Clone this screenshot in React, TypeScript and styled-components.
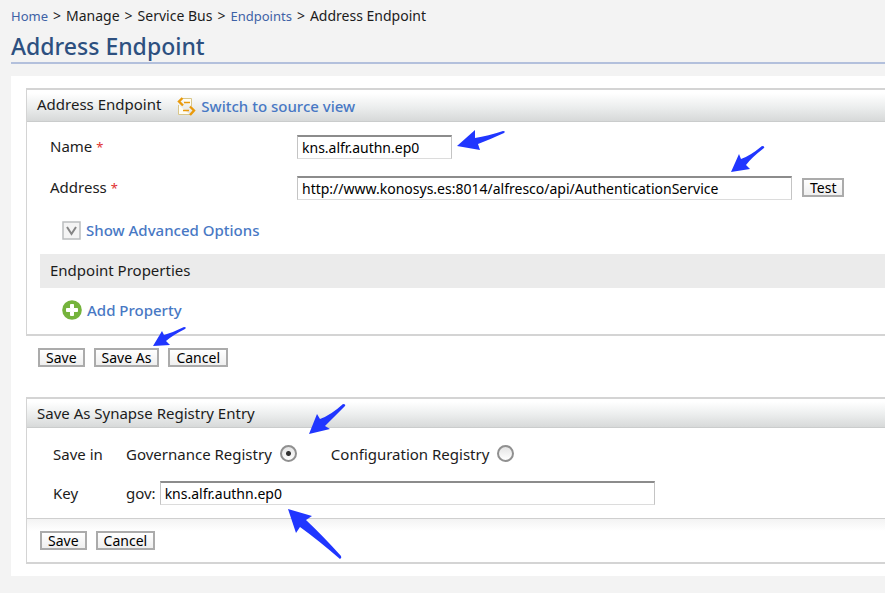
import React, { useState } from "react";
import styled, { createGlobalStyle } from "styled-components";

const GlobalStyle = createGlobalStyle`
  * { box-sizing: border-box; }
  body {
    margin: 0;
    background: #f3f3f3;
    color: #1c1c1c;
    font-family: "Noto Sans", "Open Sans", sans-serif;
    font-size: 15px;
    line-height: 20px;
    overflow-x: hidden;
  }
`;

const Page = styled.div`
  padding: 6px 0 16px 11px;
`;

const Breadcrumb = styled.nav`
  display: flex;
  gap: 5px;
  font-size: 14px;
  line-height: 20px;
  white-space: nowrap;
`;

const CrumbLink = styled.a`
  color: #3e62a6;
  font-size: 13px;
  text-decoration: none;
`;

const Title = styled.h1`
  margin: 4px 0 12px;
  border-bottom: 2px solid #b3c0dc;
  color: #2d5080;
  font-size: 23px;
  font-weight: 500;
  line-height: 32px;
`;

const Workspace = styled.main`
  padding: 12px 0 12px 15px;
  background: #fff;
`;

const Panel = styled.section`
  border: solid #d4d4d4;
  border-width: 2px 0 2px 1px;
`;

const PanelHeader = styled.header`
  display: flex;
  align-items: flex-start;
  gap: 16px;
  padding: 4px 0 4px 10px;
  border-bottom: 1px solid #cacccc;
  background: linear-gradient(#fff 10%, #eceeee 55%, #d7d9d9);
`;

const PanelTitle = styled.h2`
  margin: 0;
  font-size: 15px;
  font-weight: 400;
  line-height: 20px;
`;

const ActionLink = styled.a`
  display: inline-flex;
  align-items: center;
  gap: 5px;
  color: #4878c4;
  font-weight: 500;
  text-decoration: none;
`;

const HeaderLink = styled(ActionLink)`
  padding: 2px 0 1px;
`;

const FormRows = styled.div`
  padding-top: 4px;
`;

const FormRow = styled.div`
  display: grid;
  grid-template-columns: 247px 1fr;
  align-items: center;
  height: 41px;
  padding-left: 23px;
`;

const Required = styled.span`
  color: #e03030;
  font-size: 13px;
`;

const Controls = styled.div<{ $gap?: number }>`
  display: flex;
  align-items: center;
  gap: ${(p) => p.$gap ?? 10}px;
`;

const Anchor = styled.span`
  position: relative;
  display: inline-flex;
`;

const TextField = styled.input<{ $width: number }>`
  width: ${(p) => p.$width}px;
  height: 24px;
  padding: 0 4px;
  border: 1px solid #c4c4c4;
  border-top: 2px solid #8c8c8c;
  border-bottom-color: #dcdcdc;
  border-radius: 0;
  background: #fff;
  color: #000;
  font: 14px "Noto Sans", "Open Sans", sans-serif;
  outline: none;
`;

const Button = styled.button`
  height: 19px;
  padding: 0 6px;
  border: 2px solid #ababab;
  border-radius: 0;
  background: linear-gradient(#fff, #efefef);
  color: #000;
  font: 14px/15px "Noto Sans", "Open Sans", sans-serif;
`;

const Indented = styled.div`
  display: flex;
  align-items: center;
  padding: 12px 0 14px 35px;
`;

const SubHeading = styled.h3`
  margin: 0 0 0 13px;
  padding: 6px 10px 8px;
  background: #ebebeb;
  font-size: 15px;
  font-weight: 400;
  line-height: 20px;
`;

const ButtonBar = styled.div`
  display: flex;
  gap: 9px;
  padding: 12px 0 30px 12px;
`;

const RegistryRows = styled.div`
  padding: 6px 0;
`;

const RegistryRow = styled.div`
  display: grid;
  grid-template-columns: 73px 1fr;
  align-items: center;
  height: 39px;
  padding-left: 26px;
`;

const RadioLabel = styled.label`
  position: relative;
  display: inline-flex;
  align-items: center;
  gap: 8px;
`;

const Radio = styled.input`
  appearance: none;
  width: 17px;
  height: 17px;
  margin: 0;
  border: 2px solid #909090;
  border-radius: 50%;
  background: linear-gradient(#e4e4e4, #fff);
  &:checked {
    background: radial-gradient(circle, #333 0 2px, transparent 3px), linear-gradient(#e4e4e4, #fff);
  }
`;

const Footer = styled.footer`
  display: flex;
  gap: 9px;
  padding: 12px 0 12px 13px;
  border-top: 1px solid #cfcfcf;
  background: linear-gradient(#f3f3f3, #fff 12px);
`;

const ArrowSvg = styled.svg<{ $left: number; $top: number }>`
  position: absolute;
  left: ${(p) => p.$left}px;
  top: ${(p) => p.$top}px;
  fill: #2036ff;
  pointer-events: none;
`;

type ArrowProps = { left: number; top: number; width: number; height: number; d: string };

const Arrow = ({ left, top, width, height, d }: ArrowProps) => (
  <ArrowSvg $left={left} $top={top} width={width} height={height} viewBox={`0 0 ${width} ${height}`} aria-hidden>
    <path d={d} />
  </ArrowSvg>
);

const SourceIcon = () => (
  <svg width="19" height="19" viewBox="0 0 19 19" fill="none" aria-hidden>
    <path d="M4 1.500h10.500V9M13 17.500H1.500V8" fill="#fffdf3" stroke="#d9c689" />
    <path d="M5.500 1 2 4.500 6 8.500M13 9.500 17 13.500 13 18" stroke="#e99a0c" strokeWidth="2.400" />
    <path d="M7 5.500h6M6 13.500h6" stroke="#e99a0c" strokeWidth="1.600" />
  </svg>
);

const ExpandIcon = () => (
  <svg width="19" height="19" viewBox="0 0 19 19" fill="none" aria-hidden>
    <path d="M1 1h17v17H1z" fill="#f4f4f4" stroke="#bbbdbf" strokeWidth="1.500" />
    <path d="m5 6 4.500 7L14 6" stroke="#858585" strokeWidth="2" />
  </svg>
);

const AddIcon = () => (
  <svg width="20" height="20" viewBox="0 0 20 20" aria-hidden>
    <circle cx="10" cy="10" r="9.800" fill="#75b33c" />
    <path d="M8.500 4.500h3v4h4v3h-4v4h-3v-4h-4v-3h4z" fill="#fff" stroke="#fff" strokeLinejoin="round" />
  </svg>
);

export default function App() {
  const [registry, setRegistry] = useState("gov");
  return (
    <>
      <GlobalStyle />
      <Page>
        <Breadcrumb aria-label="Breadcrumb">
          <CrumbLink href="#home">Home</CrumbLink>
          <span>&gt;</span>
          <span>Manage</span>
          <span>&gt;</span>
          <span>Service Bus</span>
          <span>&gt;</span>
          <CrumbLink href="#endpoints">Endpoints</CrumbLink>
          <span>&gt;</span>
          <span>Address Endpoint</span>
        </Breadcrumb>
        <Title>Address Endpoint</Title>
        <Workspace>
          <Panel>
            <PanelHeader>
              <PanelTitle>Address Endpoint</PanelTitle>
              <HeaderLink href="#source">
                <SourceIcon />
                Switch to source view
              </HeaderLink>
            </PanelHeader>
            <FormRows>
              <FormRow>
                <label htmlFor="name">Name <Required>*</Required></label>
                <Controls>
                  <Anchor>
                    <TextField id="name" $width={155} defaultValue="kns.alfr.authn.ep0" />
                    <Arrow left={160} top={-5} width={50} height={21} d="M0 16 18 0 18 8Q31 6 46 1Q49 1 47 3Q34 9 21 14L23 20Z" />
                  </Anchor>
                </Controls>
              </FormRow>
              <FormRow>
                <label htmlFor="address">Address <Required>*</Required></label>
                <Controls>
                  <Anchor>
                    <TextField id="address" $width={495} defaultValue="http://www.konosys.es:8014/alfresco/api/AuthenticationService" />
                    <Arrow left={434} top={-30} width={34} height={27} d="M0 26 8 8 10 13Q19 10 31 0Q34 0 33 2Q20 12 15 19L19 23Z" />
                  </Anchor>
                  <Button type="button">Test</Button>
                </Controls>
              </FormRow>
            </FormRows>
            <Indented>
              <ActionLink href="#advanced"><ExpandIcon />Show Advanced Options</ActionLink>
            </Indented>
            <SubHeading>Endpoint Properties</SubHeading>
            <Indented>
              <ActionLink href="#add-property"><AddIcon />Add Property</ActionLink>
            </Indented>
          </Panel>
          <ButtonBar>
            <Button type="button">Save</Button>
            <Anchor>
              <Button type="button">Save As</Button>
              <Arrow left={59} top={-21} width={34} height={20} d="M0 19 9 4 11 8Q21 5 31 0Q34 0 32 2Q20 8 13 14L17 18Z" />
            </Anchor>
            <Button type="button">Cancel</Button>
          </ButtonBar>
          <Panel>
            <PanelHeader>
              <PanelTitle>Save As Synapse Registry Entry</PanelTitle>
            </PanelHeader>
            <RegistryRows>
              <RegistryRow role="radiogroup" aria-labelledby="save-in">
                <span id="save-in">Save in</span>
                <Controls $gap={34}>
                  <RadioLabel>
                    Governance Registry
                    <Radio type="radio" name="registry" checked={registry === "gov"} onChange={() => setRegistry("gov")} />
                    <Arrow left={183} top={-40} width={37} height={31} d="M0 30 8 10 11 15Q22 11 34 0Q37 0 36 2Q25 13 16 22L21 25Z" />
                  </RadioLabel>
                  <RadioLabel>
                    Configuration Registry
                    <Radio type="radio" name="registry" checked={registry === "conf"} onChange={() => setRegistry("conf")} />
                  </RadioLabel>
                </Controls>
              </RegistryRow>
              <RegistryRow>
                <label htmlFor="key">Key</label>
                <Controls $gap={4}>
                  <span>gov:</span>
                  <Anchor>
                    <TextField id="key" $width={495} defaultValue="kns.alfr.authn.ep0" />
                    <Arrow left={128} top={28} width={55} height={51} d="M0 0 24 7 18 11Q35 27 53 47Q54 49 52 50Q30 31 12 18L8 24Z" />
                  </Anchor>
                </Controls>
              </RegistryRow>
            </RegistryRows>
            <Footer>
              <Button type="button">Save</Button>
              <Button type="button">Cancel</Button>
            </Footer>
          </Panel>
        </Workspace>
      </Page>
    </>
  );
}
